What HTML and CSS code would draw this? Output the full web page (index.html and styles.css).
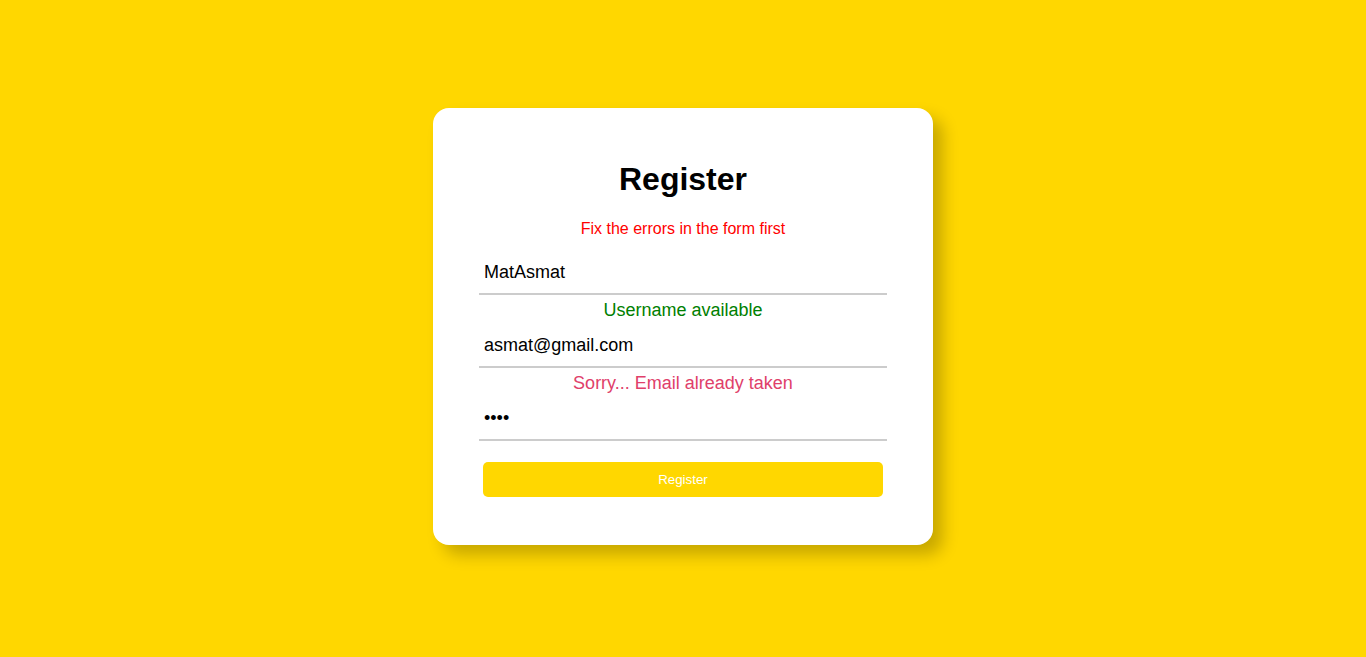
FILE: index.html
```html
<!DOCTYPE html>
<html lang="en">
<head>
<meta charset="utf-8">
<title>Register</title>
<link rel="stylesheet" href="styles.css">
</head>
<body>
<main class="page">
  <form class="card" onsubmit="return false">
    <h1 class="title">Register</h1>
    <p class="form-error">Fix the errors in the form first</p>
    <input class="field" type="text" value="MatAsmat">
    <p class="msg msg-ok">Username available</p>
    <input class="field" type="email" value="asmat@gmail.com">
    <p class="msg msg-bad">Sorry... Email already taken</p>
    <input class="field" type="password" value="abcd">
    <button class="btn" type="submit">Register</button>
  </form>
</main>
</body>
</html>
```
FILE: styles.css
```css
html, body {
  margin: 0;
  padding: 0;
}
body {
  background: #ffd700;
  font-family: "Liberation Sans", Arial, sans-serif;
  min-height: 657px;
}
.page {
  display: flex;
  justify-content: center;
  padding-top: 108px;
}
.card {
  box-sizing: border-box;
  width: 500px;
  background: #fff;
  border-radius: 16px;
  box-shadow: 10px 10px 16px rgba(0, 0, 0, 0.22);
  padding: 53px 46px 48px;
  display: flex;
  flex-direction: column;
}
.title {
  margin: 0;
  font-size: 32px;
  line-height: 37px;
  font-weight: bold;
  text-align: center;
  color: #000;
}
.form-error {
  margin: 22px 0 14px;
  font-size: 16px;
  line-height: 18px;
  text-align: center;
  color: #ff0000;
}
.field {
  box-sizing: border-box;
  width: 100%;
  height: 43px;
  margin: 0;
  padding: 10px 5px;
  border: none;
  border-bottom: 2px solid #cccccc;
  outline: none;
  font-family: "Liberation Sans", Arial, sans-serif;
  font-size: 18px;
  line-height: 21px;
  color: #000;
  background: transparent;
}
.msg {
  margin: 5px 0 4px;
  font-size: 18px;
  line-height: 21px;
  text-align: center;
}
.msg-ok {
  color: #008000;
}
.msg-bad {
  color: #e0406a;
}
.btn {
  align-self: center;
  width: 400px;
  height: 35px;
  margin-top: 21px;
  border: none;
  border-radius: 5px;
  background: #ffd700;
  color: #fff;
  font-family: "Liberation Sans", Arial, sans-serif;
  font-size: 13.333px;
  cursor: pointer;
}
```
